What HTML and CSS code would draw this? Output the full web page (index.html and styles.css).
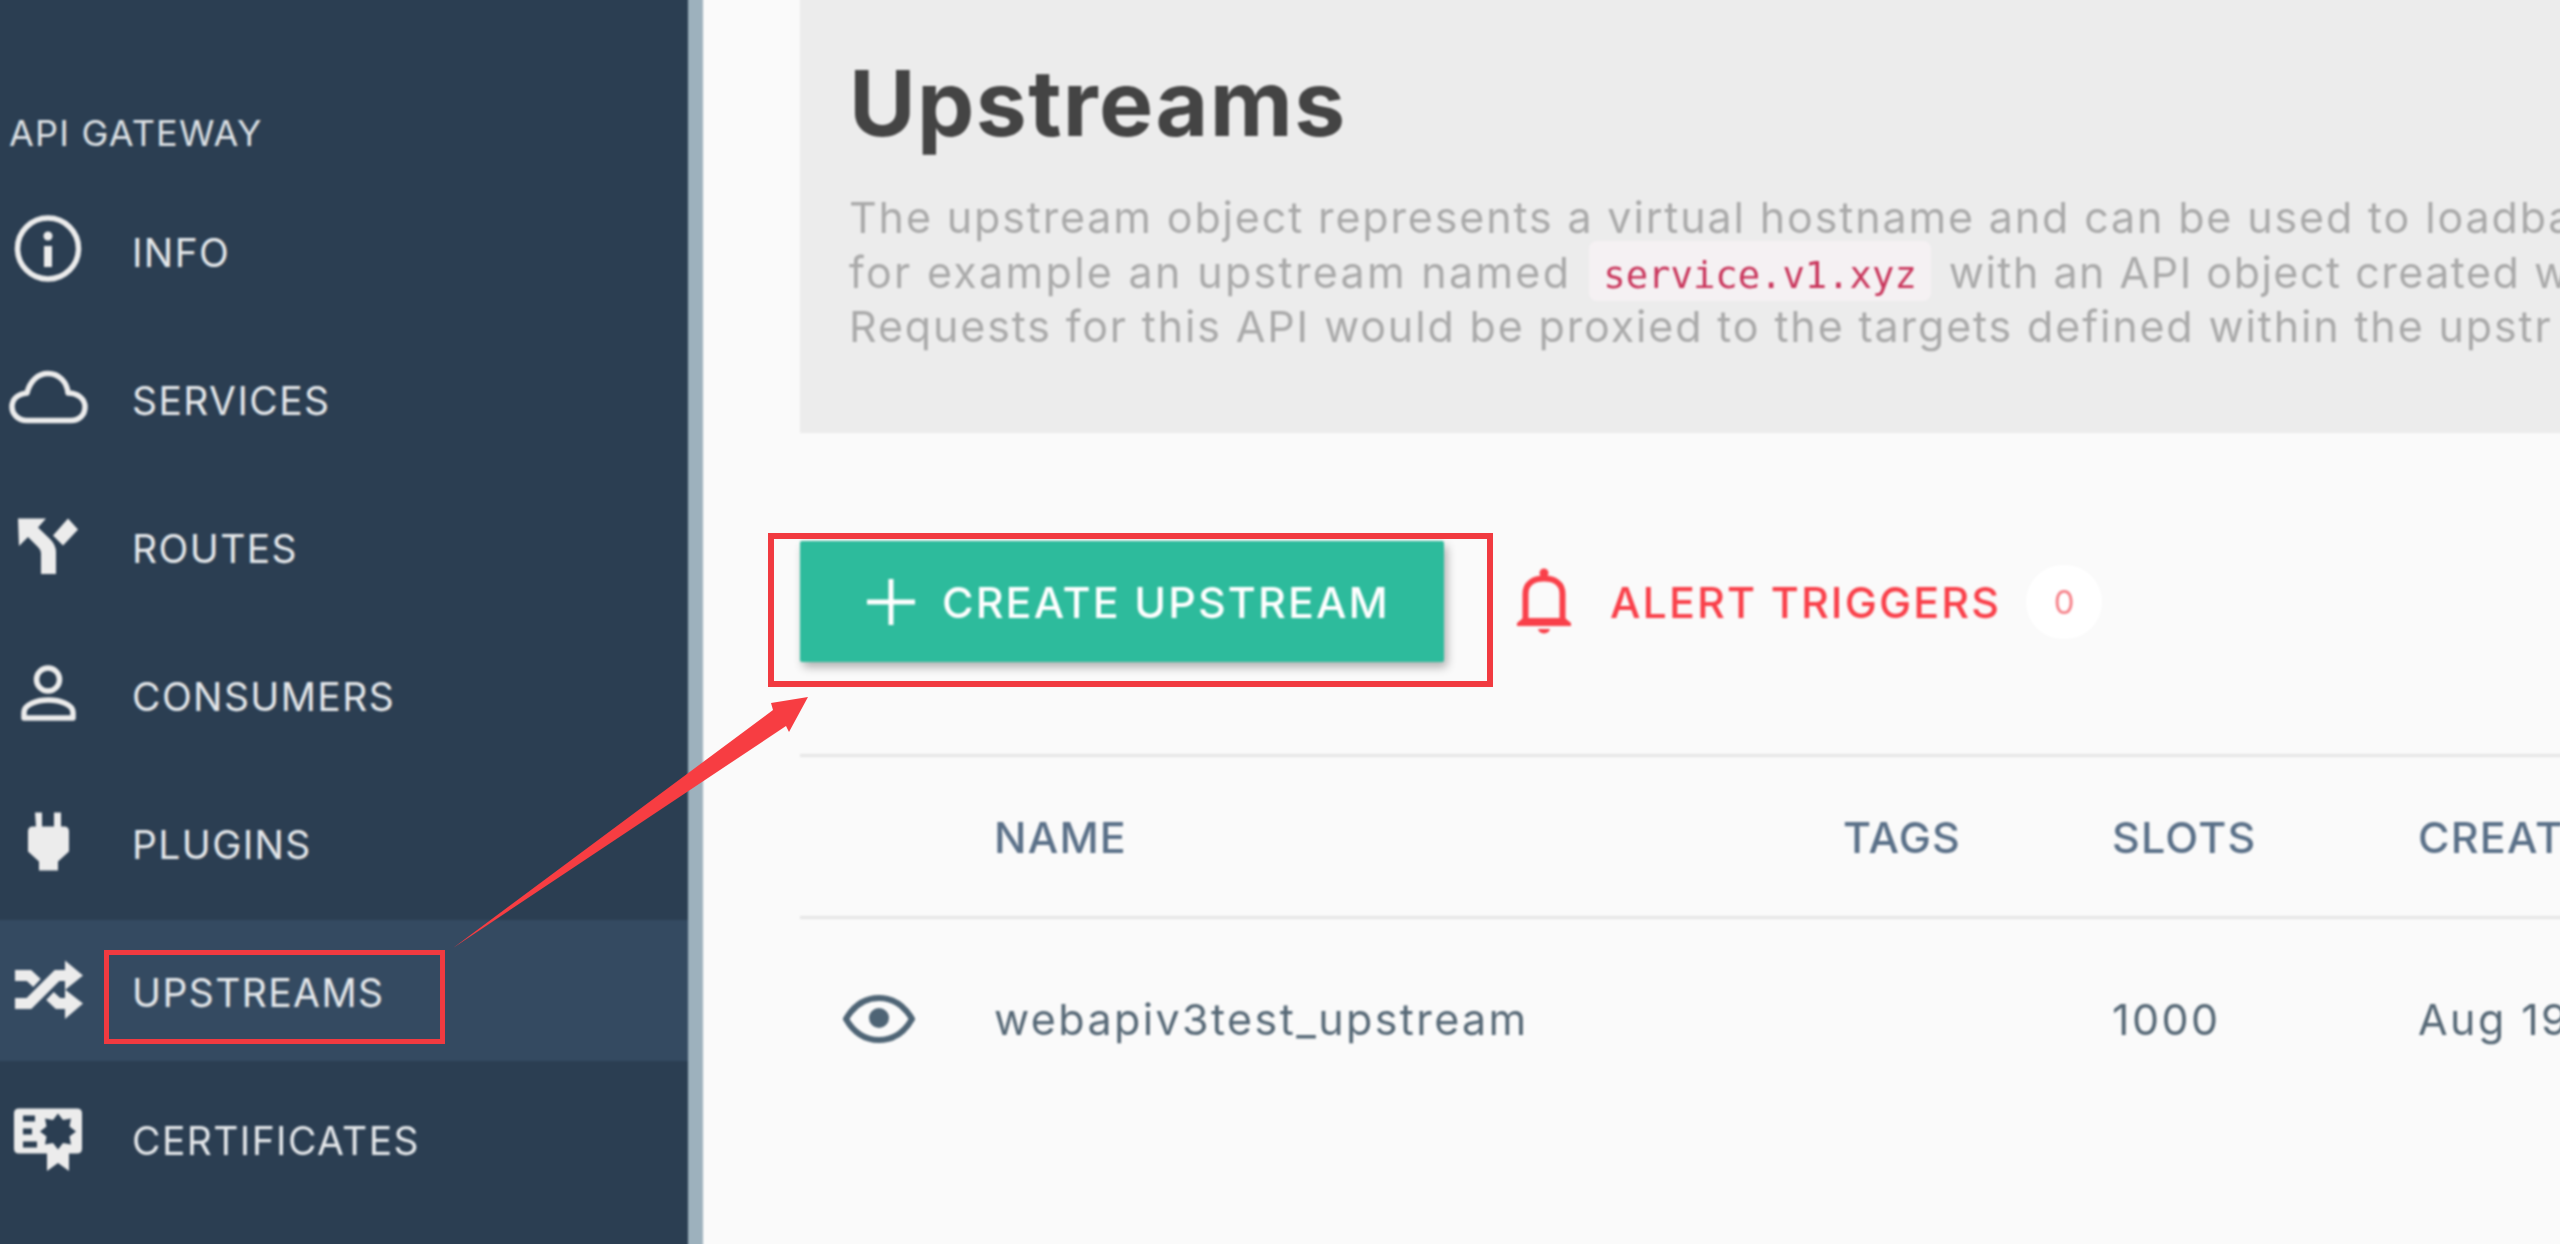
FILE: index.html
```html
<!DOCTYPE html>
<html lang="en">
<head>
<meta charset="utf-8">
<title>Upstreams</title>
<link rel="stylesheet" href="styles.css">
</head>
<body>
<div class="app">
  <aside class="sidebar">
    <div class="side-title">API GATEWAY</div>
    <nav class="nav">
      <a class="nav-item">
        <svg class="nav-icon" viewBox="0 0 96 96"><circle class="line" cx="48" cy="45.5" r="30.5"/><circle class="solid" cx="48" cy="33" r="4.5"/><rect class="solid" x="44" y="43" width="8" height="21"/></svg>
        <span class="nav-label">INFO</span>
      </a>
      <a class="nav-item">
        <svg class="nav-icon" viewBox="0 0 96 96"><path class="line" d="M27 69.5C17 69.5 12 62 12 56C12 48 18 43 27 42C30 30 38 22.5 48 22.5C59 22.5 67 31 68 42C78 42 85 48 85 56C85 64 79 69.5 71 69.5Z"/></svg>
        <span class="nav-label">SERVICES</span>
      </a>
      <a class="nav-item">
        <svg class="nav-icon" viewBox="0 0 96 96"><path class="solid" d="M18 19.5H46L38 28.5L50 40Q56 46 56 53V75H41V54Q41 51 38 48L28 38L19 47Z"/><path class="solid" d="M53 36.5L68 19.5L78 30.5L63 46.5Z"/></svg>
        <span class="nav-label">ROUTES</span>
      </a>
      <a class="nav-item">
        <svg class="nav-icon" viewBox="0 0 96 96"><circle class="line" cx="48" cy="32.5" r="11.5"/><path class="line" d="M24 71H73V65.5C73 57.5 60 53 48.5 53C37 53 24 57.5 24 65.5Z"/></svg>
        <span class="nav-label">CONSUMERS</span>
      </a>
      <a class="nav-item">
        <svg class="nav-icon" viewBox="0 0 96 96"><path class="solid" d="M35 17.5h7v14h12v-14h7v14h3q5 0 5 5v20l-11 10v9h-19v-9l-11-10v-20q0-5 5-5h3z"/></svg>
        <span class="nav-label">PLUGINS</span>
      </a>
      <a class="nav-item is-active">
        <svg class="nav-icon" viewBox="0 0 96 96"><path class="line bold" d="M15 60.5H29L57 32.5H70"/><path class="solid" d="M65 17.5L83 32.5L65 47Z"/><path class="line bold" d="M15 32.5H29L37 40M50 53L58 60.5H70"/><path class="solid" d="M65 46.5L83 60.5L65 76Z"/></svg>
        <span class="nav-label">UPSTREAMS</span>
      </a>
      <a class="nav-item">
        <svg class="nav-icon" viewBox="0 0 96 96"><path class="solid" d="M19 17.5H77Q82 17.5 82 22.5V57.5Q82 62.5 77 62.5H69V80L58 72L47 80V62.5H19Q14 62.5 14 57.5V22.5Q14 17.5 19 17.5Z"/><rect class="hole" x="23" y="24.5" width="12" height="6"/><rect class="hole" x="23" y="37.5" width="9" height="6"/><rect class="hole" x="23" y="50.5" width="14" height="6"/><path class="hole" d="M58 22.5L63 29L71 27.5L69.500 35.500L76 40.500L69.500 45.500L71 53.500L63 52L58 58.500L53 52L45 53.500L46.500 45.500L40 40.500L46.500 35.500L45 27.500L53 29Z"/></svg>
        <span class="nav-label">CERTIFICATES</span>
      </a>
    </nav>
  </aside>

  <main class="main">
    <header class="panel">
      <h1 class="title">Upstreams</h1>
      <p class="intro">The upstream object represents a virtual hostname and can be used to loadba<br><span class="lead-in">for example an upstream named</span> <code class="chip">service.v1.xyz</code> <span class="lead-out">with an API object created w</span><br>Requests for this API would be proxied to the targets defined within the upstr</p>
    </header>

    <div class="toolbar">
      <button class="btn-create">
        <svg class="plus" viewBox="0 0 48 46"><path d="M24 0V46M0 23H48"/></svg>
        <span>CREATE UPSTREAM</span>
      </button>
      <a class="alert-link">
        <svg class="bell" viewBox="0 0 60 72"><circle class="bell-fill" cx="30" cy="7" r="4.500"/><path class="bell-line" d="M11.500 53V28C11.500 17 20 12.500 30 12.500C40 12.500 48.500 17 48.500 28V53"/><path class="bell-fill" d="M9 52H51L57 57V60H3V57Z"/><path class="bell-fill" d="M24 63H36Q35 67 30 67.500Q25 67 24 63Z"/></svg>
        <span>ALERT TRIGGERS</span>
      </a>
      <span class="count">0</span>
    </div>

    <section class="table">
      <div class="tr th">
        <div></div><div>NAME</div><div>TAGS</div><div>SLOTS</div><div>CREAT</div>
      </div>
      <div class="tr td">
        <div class="eye-cell"><svg class="eye" viewBox="0 0 72 50"><path d="M3 25C11 11 23 4 36 4C49 4 61 11 69 25C61 39 49 46 36 46C23 46 11 39 3 25Z"/><circle cx="36" cy="24" r="10"/></svg></div>
        <div>webapiv3test_upstream</div><div></div><div>1000</div><div>Aug 19</div>
      </div>
    </section>
  </main>
</div>

<div class="mark mark-nav"></div>
<div class="mark mark-btn"></div>
<svg class="arrow" viewBox="0 0 2560 1244"><polygon points="453,948 773,710 771,703 808,697 789,732 786,726"/></svg>
</body>
</html>
```

FILE: styles.css
```css
* { box-sizing: border-box; }
html, body { margin: 0; height: 100%; overflow: hidden; }
body { background: #fafafa; font-family: Inter, "Noto Sans", sans-serif; position: relative; }

/* the blur's soft edge is pushed outside the window by the 4px overhang */
.app { display: flex; width: 2568px; height: 1252px; margin: -4px 0 0 -4px; overflow: hidden; filter: blur(0.8px); }

/* sidebar */
.sidebar { flex: 0 0 707px; background: #2b3e52; border-right: 15px solid #9db1bd; padding-top: 117px; }
.side-title { height: 40px; line-height: 40px; padding-left: 13px; font-size: 36px; letter-spacing: 1.2px; color: #dce0e4; }
.nav { display: flex; flex-direction: column; gap: 7px; margin-top: 27px; }
.nav-item { display: flex; align-items: center; height: 141px; padding-left: 4px; color: #e4e7ea; }
.nav-item.is-active { background: #344a61; }
.nav-icon { flex: 0 0 96px; width: 96px; height: 96px; }
.nav-label { margin: 3px 0 0 36px; font-size: 39px; letter-spacing: 1.4px; }
.line { fill: none; stroke: #ececec; stroke-width: 5.500; stroke-linejoin: round; }
.line.bold { stroke-width: 11; stroke-linejoin: miter; }
.solid { fill: #ececec; }
.hole { fill: #2b3e52; }

/* main */
.main { flex: 1; min-width: 0; padding-left: 97px; }
.panel { height: 437px; background: #ececec; padding: 57px 0 0 49px; }
.title { margin: 0; font-size: 91px; line-height: 100px; font-weight: 700; letter-spacing: 1.4px; color: #444; }
.intro { margin: 37px 0 0; font-size: 43px; line-height: 54.500px; letter-spacing: 1.85px; color: #aaa; white-space: nowrap; }
.lead-in { letter-spacing: 2.3px; }
.lead-out { letter-spacing: 1.5px; }
.chip { display: inline-block; height: 60px; line-height: 68px; margin: -4px 4px -12px; padding: 0 14px; vertical-align: top; border-radius: 8px; background: #f5f1f3; font-family: "DejaVu Sans Mono", monospace; font-size: 37.200px; letter-spacing: 0; color: #c9365c; }

.toolbar { display: flex; align-items: center; margin-top: 108px; height: 121px; }
.btn-create { display: flex; align-items: center; width: 644px; height: 121px; padding: 0 0 0 67px; border: 0; border-radius: 2px; background: #2dbb9c; box-shadow: 3px 5px 10px rgba(0,0,0,.3); color: #fff; font: 500 43px Inter, sans-serif; letter-spacing: 2.1px; }
.plus { width: 48px; height: 46px; margin-right: 27px; fill: none; stroke: #fff; stroke-width: 5; }
.alert-link { display: flex; align-items: center; margin-left: 70px; color: #f9404a; font-size: 43px; font-weight: 500; letter-spacing: 2.1px; }
.bell { width: 60px; height: 72px; margin-right: 36px; }
.bell-line { fill: none; stroke: #f9404a; stroke-width: 6; }
.bell-fill { fill: #f9404a; }
.count { display: flex; align-items: center; justify-content: center; width: 76px; height: 74px; margin-left: 25px; border-radius: 37px; background: #fff; color: #f6828a; font-size: 33px; }

/* table */
.table { margin-top: 92px; border-top: 3px solid #e6e6e6; }
.tr { display: grid; grid-template-columns: 194px 849px 269px 306px 1fr; align-items: center; }
.th { height: 162px; border-bottom: 3px solid #e6e6e6; color: #5a7088; font-size: 43px; font-weight: 500; letter-spacing: 1.2px; white-space: nowrap; }
.td { height: 200px; color: #566876; font-size: 43px; letter-spacing: 2.4px; white-space: nowrap; }
.eye-cell { padding-left: 43px; display: flex; }
.eye { width: 72px; height: 50px; }
.eye path { fill: none; stroke: #4e6475; stroke-width: 6; }
.eye circle { fill: #4e6475; }

/* annotations */
.mark { position: absolute; border: 5px solid #f13a40; filter: blur(0.5px); }
.mark-nav { left: 104px; top: 950px; width: 341px; height: 94px; }
.mark-btn { left: 768px; top: 533px; width: 725px; height: 154px; border-width: 6px; }
.arrow { position: absolute; left: 0; top: 0; width: 2560px; height: 1244px; pointer-events: none; }
.arrow polygon { fill: #f73d42; }
```
